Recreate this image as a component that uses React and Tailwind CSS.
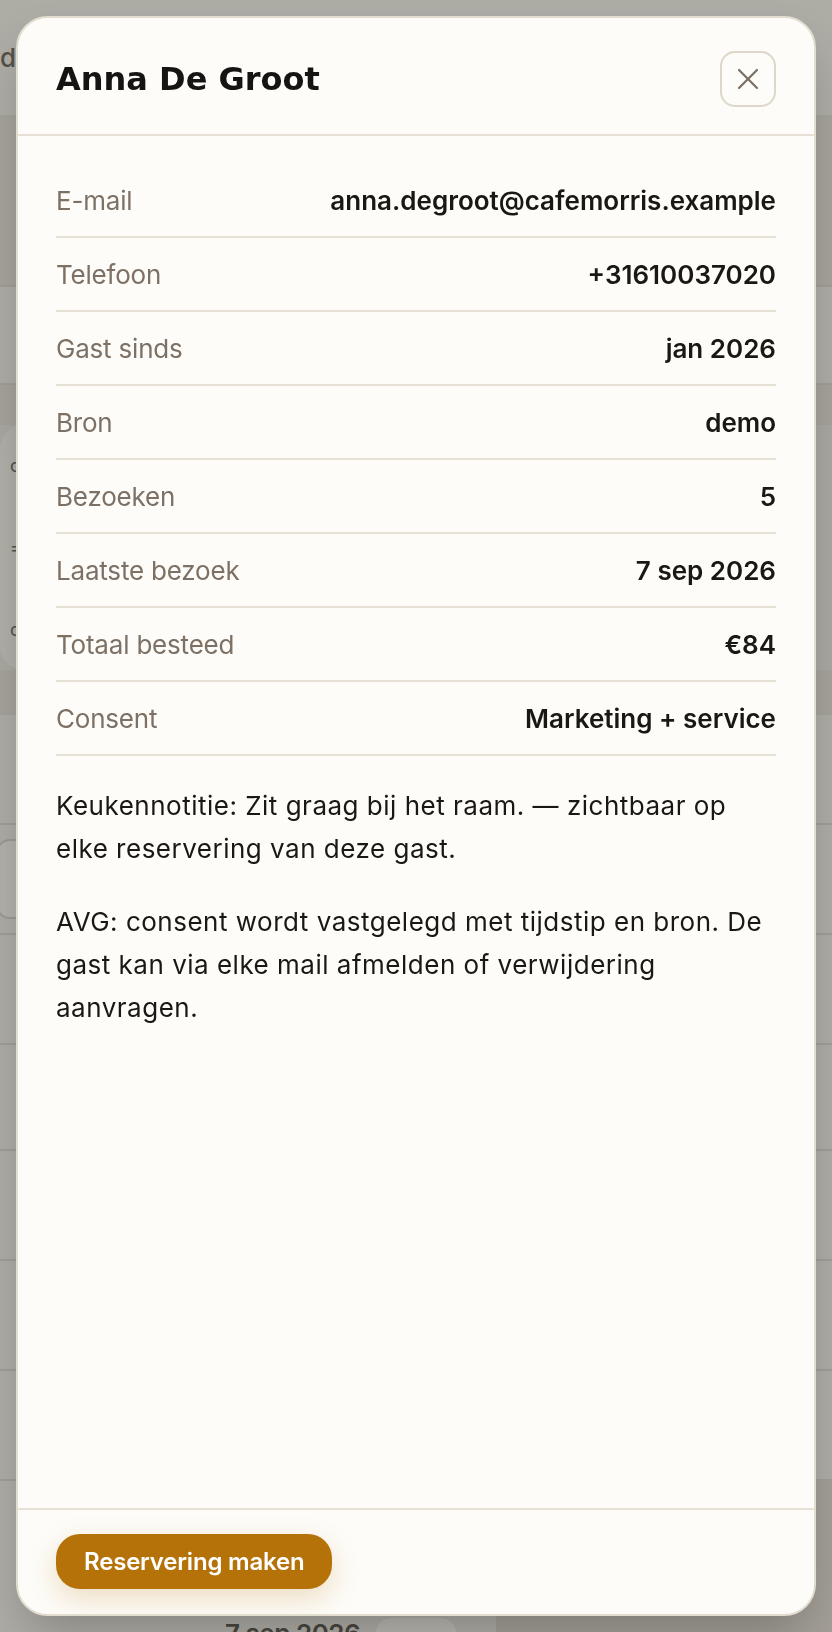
import React from 'react';

const rows = [
  ['E-mail', 'anna.degroot@cafemorris.example'],
  ['Telefoon', '+31610037020'],
  ['Gast sinds', 'jan 2026'],
  ['Bron', 'demo'],
  ['Bezoeken', '5'],
  ['Laatste bezoek', '7 sep 2026'],
  ['Totaal besteed', '€84'],
  ['Consent', 'Marketing + service'],
];

const CloseIcon = () => (
  <svg width="22" height="22" viewBox="0 0 22 22" fill="none" stroke="#7b6f63" strokeWidth="2.2" strokeLinecap="round">
    <path d="M2 2 L20 20" />
    <path d="M20 2 L2 20" />
  </svg>
);

// dimmed page behind the dialog
const Backdrop = () => (
  <div className="flex flex-col w-[832px] h-[1632px] bg-[#adaca5] text-[#55514a] font-['Inter',sans-serif]">
    <div className="h-[115px] flex items-center text-[26px] font-medium">de</div>
    <div className="h-[170px] bg-[#a6a39b]" />
    <div className="h-[100px] bg-[#adaca5] border-y-2 border-[#a19e96]" />
    <div className="h-[40px] bg-[#a6a39b]" />
    <div className="h-[245px] bg-[#a9a8a1] flex">
      <div className="w-[30px] h-full rounded-l-[24px] bg-[#b0afa8] flex flex-col justify-around pl-[10px] text-[18px]">
        <span>c</span>
        <span>=</span>
        <span>c</span>
      </div>
    </div>
    <div className="h-[45px] bg-[#a6a39b]" />
    <div className="h-[110px] border-b-2 border-[#a09d96]" />
    <div className="h-[110px] border-b-2 border-[#a09d96] flex items-center">
      <div className="w-[44px] h-[80px] rounded-[14px] border-2 border-[#9c9990] bg-[#b2b1aa] -ml-[4px]" />
    </div>
    <div className="h-[110px] border-b-2 border-[#a09d96]" />
    <div className="h-[106px] border-b-2 border-[#a09d96]" />
    <div className="h-[110px] border-b-2 border-[#a09d96]" />
    <div className="h-[110px] border-b-2 border-[#a09d96]" />
    <div className="h-[110px] border-b-2 border-[#a09d96]" />
    <div className="flex h-[151px]">
      <div className="w-[496px] flex items-start pl-[225px] pt-[137px] gap-[16px] text-[26px] leading-[32px] font-semibold tracking-[-0.5px] text-[#4a463f]">
        <span>7 sep 2026</span>
        <span className="w-[80px] h-[30px] rounded-full bg-[#b8b7b1]" />
      </div>
      <div className="flex-1 bg-[#a39f97]" />
    </div>
  </div>
);

export default function App() {
  return (
    <div className="relative w-[832px] h-[1632px] overflow-hidden">
      <Backdrop />
      <div className="fixed inset-4 flex flex-col rounded-[32px] border-2 border-[#e3ddd0] bg-[#fdfcf8] shadow-2xl overflow-hidden font-['Inter',sans-serif]">
        <div className="flex items-center justify-between px-[38px] pt-[33px] pb-[27px] border-b-2 border-[#e6e1d4]">
          <h2 className="font-['DejaVu_Sans',sans-serif] text-[32px] font-bold text-[#161412] leading-[40px]">
            Anna De Groot
          </h2>
          <button className="w-[56px] h-[56px] rounded-[15px] border-2 border-[#ddd6c9] flex items-center justify-center bg-[#fdfcf8]">
            <CloseIcon />
          </button>
        </div>

        <div className="flex-1 px-[38px] pt-[28px]">
          {rows.map(([label, value]) => (
            <div key={label} className="h-[74px] flex items-center justify-between border-b-2 border-[#e6e1d4]">
              <span className="text-[26px] leading-[39px] tracking-[-0.2px] text-[#7d7166]">{label}</span>
              <span className="text-[26px] leading-[39px] font-semibold text-[#1a1815]">{value}</span>
            </div>
          ))}
          <p className="mt-[28px] text-[26px] leading-[43px] tracking-[0.5px] text-[#1a1815]">
            Keukennotitie: Zit graag bij het raam. — zichtbaar op elke reservering van deze gast.
          </p>
          <p className="mt-[30px] text-[26px] leading-[43px] tracking-[0.5px] text-[#1a1815]">
            AVG: consent wordt vastgelegd met tijdstip en bron. De gast kan via elke mail afmelden of verwijdering aanvragen.
          </p>
        </div>

        <div className="border-t-2 border-[#e6e1d4] px-[38px] pt-[24px] pb-[25px]">
          <button className="h-[55px] px-[28px] rounded-[24px] bg-[#b57208] text-white text-[24px] tracking-[-0.2px] font-semibold shadow-[0_10px_28px_rgba(181,114,8,0.22)]">
            Reservering maken
          </button>
        </div>
      </div>
    </div>
  );
}
